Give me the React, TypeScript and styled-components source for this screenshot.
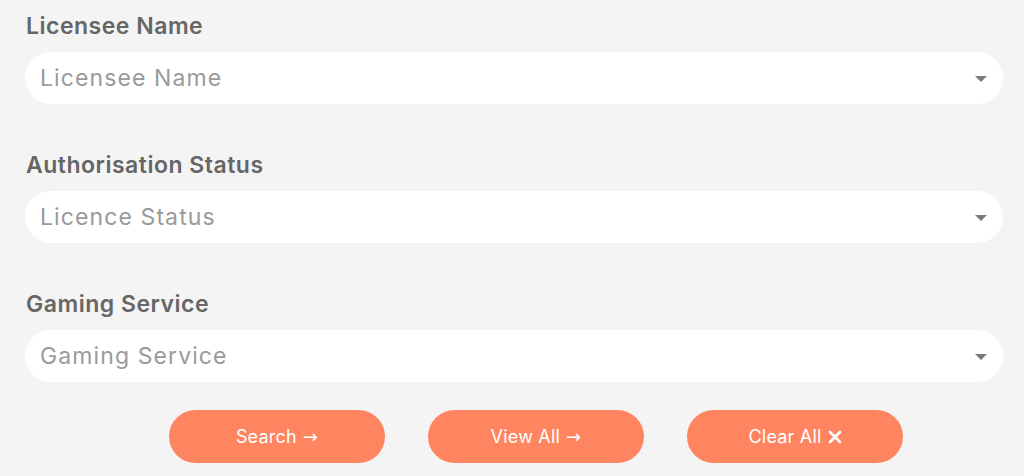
import React from 'react';
import styled, { createGlobalStyle } from 'styled-components';

const GlobalStyle = createGlobalStyle`
  html, body {
    margin: 0;
    padding: 0;
    background: #f4f4f4;
  }
  body {
    font-family: Inter, 'Noto Sans', 'Liberation Sans', sans-serif;
  }
`;

const Page = styled.div`
  width: 1024px;
  height: 476px;
  box-sizing: border-box;
  padding: 10px 21px 0 25px;
  background: #f4f4f4;
  overflow: hidden;
`;

const Field = styled.div`
  display: flex;
  flex-direction: column;
  margin-bottom: 45px;
`;

const Label = styled.label`
  font-size: 23px;
  line-height: 32px;
  font-weight: 600;
  color: #666666;
  padding-left: 1px;
  margin-bottom: 10px;
  letter-spacing: 0.5px;
`;

const SelectBox = styled.div`
  height: 52px;
  border-radius: 26px;
  background: #ffffff;
  display: flex;
  align-items: center;
  justify-content: space-between;
  padding: 0 16px 0 15px;
`;

const Placeholder = styled.span`
  font-size: 23px;
  color: #9a9a9a;
  letter-spacing: 1.1px;
`;

const Caret = styled.span`
  width: 0;
  height: 0;
  border-left: 6px solid transparent;
  border-right: 6px solid transparent;
  border-top: 6px solid #7a7a7a;
  margin-top: 2px;
`;

const Actions = styled.div`
  display: flex;
  gap: 43px;
  padding-left: 144px;
  margin-top: -17px;
`;

const Button = styled.button`
  width: 216px;
  height: 53px;
  border: none;
  border-radius: 27px;
  background: #ff8561;
  color: #ffffff;
  font-family: Inter, 'Noto Sans', 'Liberation Sans', sans-serif;
  font-size: 18px;
  letter-spacing: 0.2px;
  display: flex;
  align-items: center;
  justify-content: center;
  gap: 6px;
  cursor: pointer;
`;

const Arrow = styled.span`
  font-family: 'DejaVu Sans', sans-serif;
  font-size: 18px;
  line-height: 1;
`;

const CloseIcon = () => (
  <svg width="14" height="14" viewBox="0 0 14 14" style={{ marginTop: 1 }}>
    <path d="M2 2 L12 12 M12 2 L2 12" stroke="#ffffff" strokeWidth="2.6" strokeLinecap="round" />
  </svg>
);

const fields = [
  { label: 'Licensee Name', placeholder: 'Licensee Name' },
  { label: 'Authorisation Status', placeholder: 'Licence Status' },
  { label: 'Gaming Service', placeholder: 'Gaming Service' },
];

export default function App() {
  return (
    <>
      <GlobalStyle />
      <Page>
        {fields.map((f) => (
          <Field key={f.label}>
            <Label>{f.label}</Label>
            <SelectBox>
              <Placeholder>{f.placeholder}</Placeholder>
              <Caret />
            </SelectBox>
          </Field>
        ))}
        <Actions>
          <Button>Search <Arrow>→</Arrow></Button>
          <Button>View All <Arrow>→</Arrow></Button>
          <Button>Clear All <CloseIcon /></Button>
        </Actions>
      </Page>
    </>
  );
}
